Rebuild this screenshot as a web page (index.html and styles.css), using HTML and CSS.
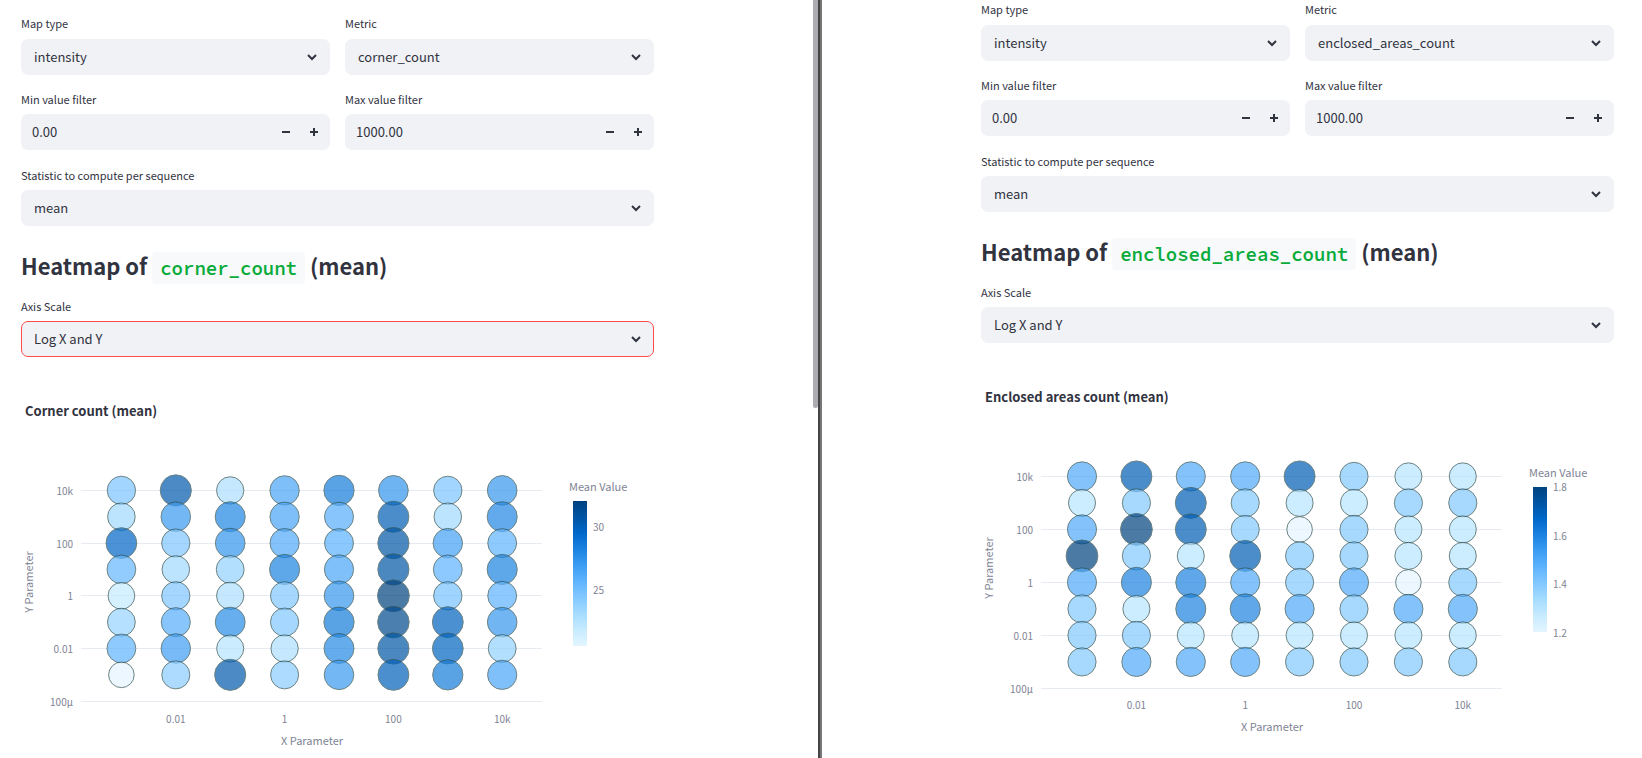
FILE: index.html
```html
<!DOCTYPE html>
<html lang="en">
<head>
<meta charset="utf-8">
<title>Heatmap comparison</title>
<link rel="stylesheet" href="styles.css">
</head>
<body>
<main class="split">
  <section class="pane pane-left">
    <div class="content">
      <div class="row">
        <div class="field">
          <label for="l-map">Map type</label>
          <div class="select"><select id="l-map"><option>intensity</option></select><svg class="chevron" viewBox="0 0 12 8"><path d="M2 2l4 4 4-4"/></svg></div>
        </div>
        <div class="field">
          <label for="l-metric">Metric</label>
          <div class="select"><select id="l-metric"><option>corner_count</option></select><svg class="chevron" viewBox="0 0 12 8"><path d="M2 2l4 4 4-4"/></svg></div>
        </div>
      </div>
      <div class="row">
        <div class="field">
          <label for="l-min">Min value filter</label>
          <div class="number"><input id="l-min" type="text" value="0.00"><button type="button" aria-label="Decrease"><svg viewBox="0 0 8 8"><path d="M0 4h8"/></svg></button><button type="button" aria-label="Increase"><svg viewBox="0 0 8 8"><path d="M0 4h8M4 0v8"/></svg></button></div>
        </div>
        <div class="field">
          <label for="l-max">Max value filter</label>
          <div class="number"><input id="l-max" type="text" value="1000.00"><button type="button" aria-label="Decrease"><svg viewBox="0 0 8 8"><path d="M0 4h8"/></svg></button><button type="button" aria-label="Increase"><svg viewBox="0 0 8 8"><path d="M0 4h8M4 0v8"/></svg></button></div>
        </div>
      </div>
      <div class="field">
        <label for="l-stat">Statistic to compute per sequence</label>
        <div class="select"><select id="l-stat"><option>mean</option></select><svg class="chevron" viewBox="0 0 12 8"><path d="M2 2l4 4 4-4"/></svg></div>
      </div>
      <h2>Heatmap of <code>corner_count</code> (mean)</h2>
      <div class="field">
        <label for="l-axis">Axis Scale</label>
        <div class="select focused"><select id="l-axis"><option>Log X and Y</option></select><svg class="chevron" viewBox="0 0 12 8"><path d="M2 2l4 4 4-4"/></svg></div>
      </div>
      <svg class="chart" id="chart-corners" viewBox="0 0 633 380" role="img" aria-label="Corner count (mean)"></svg>
    </div>
    <div class="scroll-thumb"></div>
  </section>
  <div class="divider"></div>
  <section class="pane pane-right">
    <div class="content">
      <div class="row">
        <div class="field">
          <label for="r-map">Map type</label>
          <div class="select"><select id="r-map"><option>intensity</option></select><svg class="chevron" viewBox="0 0 12 8"><path d="M2 2l4 4 4-4"/></svg></div>
        </div>
        <div class="field">
          <label for="r-metric">Metric</label>
          <div class="select"><select id="r-metric"><option>enclosed_areas_count</option></select><svg class="chevron" viewBox="0 0 12 8"><path d="M2 2l4 4 4-4"/></svg></div>
        </div>
      </div>
      <div class="row">
        <div class="field">
          <label for="r-min">Min value filter</label>
          <div class="number"><input id="r-min" type="text" value="0.00"><button type="button" aria-label="Decrease"><svg viewBox="0 0 8 8"><path d="M0 4h8"/></svg></button><button type="button" aria-label="Increase"><svg viewBox="0 0 8 8"><path d="M0 4h8M4 0v8"/></svg></button></div>
        </div>
        <div class="field">
          <label for="r-max">Max value filter</label>
          <div class="number"><input id="r-max" type="text" value="1000.00"><button type="button" aria-label="Decrease"><svg viewBox="0 0 8 8"><path d="M0 4h8"/></svg></button><button type="button" aria-label="Increase"><svg viewBox="0 0 8 8"><path d="M0 4h8M4 0v8"/></svg></button></div>
        </div>
      </div>
      <div class="field">
        <label for="r-stat">Statistic to compute per sequence</label>
        <div class="select"><select id="r-stat"><option>mean</option></select><svg class="chevron" viewBox="0 0 12 8"><path d="M2 2l4 4 4-4"/></svg></div>
      </div>
      <h2>Heatmap of <code>enclosed_areas_count</code> (mean)</h2>
      <div class="field">
        <label for="r-axis">Axis Scale</label>
        <div class="select"><select id="r-axis"><option>Log X and Y</option></select><svg class="chevron" viewBox="0 0 12 8"><path d="M2 2l4 4 4-4"/></svg></div>
      </div>
      <svg class="chart" id="chart-areas" viewBox="0 0 633 380" role="img" aria-label="Enclosed areas count (mean)"></svg>
    </div>
  </section>
</main>
<script src="charts.js"></script>
</body>
</html>
```
FILE: styles.css
```css
* {
  box-sizing: border-box;
}

body {
  margin: 0;
  background: #fff;
  color: #31333f;
  font-family: "Noto Sans CJK SC", "Noto Sans", sans-serif;
  font-size: 13px;
}

.split {
  display: flex;
  height: 100vh;
  overflow: hidden;
}

.pane {
  position: relative;
  flex: 1 1 0;
  min-width: 0;
  overflow: hidden;
}

.pane-left {
  padding: 14px 164px 0 21px;
}

.pane-right {
  padding: 0 28px 0 159px;
}

.divider {
  flex: none;
  width: 4px;
  background: #777;
  border-left: 2px solid #444;
}

.scroll-thumb {
  position: absolute;
  top: 0;
  right: 0;
  width: 5px;
  height: 408px;
  background: #acacb2;
  border-radius: 0 0 3px 3px;
}

.content {
  display: flex;
  flex-direction: column;
  gap: 15px;
}

.row {
  display: grid;
  grid-template-columns: 1fr 1fr;
  gap: 15px;
}

.row + .field {
  margin-top: 1px;
}

.field label {
  display: block;
  height: 20px;
  margin-bottom: 4px;
  font-size: 11px;
  line-height: 18px;
}

.row:first-child label {
  margin-bottom: 5px;
}

.select {
  position: relative;
}

.select select {
  display: block;
  width: 100%;
  height: 36px;
  padding: 0 32px 2px 12px;
  border: 1px solid #f0f2f6;
  border-radius: 7px;
  background: #f0f2f6;
  color: inherit;
  font: inherit;
  appearance: none;
  outline: none;
}

.select.focused select {
  border-color: #ff4b4b;
}

.chevron {
  position: absolute;
  top: 14px;
  right: 12px;
  width: 12px;
  height: 8px;
  fill: none;
  stroke: #31333f;
  stroke-width: 2;
  pointer-events: none;
}

.number {
  display: flex;
  height: 36px;
  padding-right: 2px;
  border-radius: 7px;
  background: #f0f2f6;
}

.number input {
  flex: 1;
  min-width: 0;
  padding: 0 11px 1px;
  border: 0;
  background: none;
  color: inherit;
  font: inherit;
  outline: none;
}

.number button {
  display: flex;
  align-items: center;
  justify-content: center;
  width: 28px;
  padding: 0;
  border: 0;
  background: none;
}

.number svg {
  width: 8px;
  height: 8px;
  overflow: visible;
  stroke: #31333f;
  stroke-width: 2;
}

h2 {
  margin: 7px 0 0;
  font-size: 22px;
  font-weight: 600;
  line-height: 34px;
  height: 34px;
  white-space: nowrap;
}

code {
  padding: 4px 8px;
  border-radius: 4px;
  background: #f8f9fb;
  color: #09ab3b;
  font-family: "Source Code Pro", "Noto Sans Mono CJK SC", "Liberation Mono", monospace;
  font-size: 19px;
  font-weight: 600;
}

.chart {
  display: block;
  width: 100%;
  overflow: visible;
}

.chart text {
  fill: #808495;
  font-size: 11px;
}

.chart .tick {
  font-size: 10px;
}

.chart .title {
  fill: #31333f;
  font-size: 13px;
  font-weight: 700;
}

.chart .grid {
  stroke: #e6eaf1;
}

.chart .point {
  stroke: #2f4f4f;
  stroke-width: 1;
  opacity: 0.7;
}
```
FILE: charts.js
```js
const SCALE = ["#e4f5ff", "#c7ebff", "#a6dcff", "#83c9ff", "#60b4ff",
  "#3d9df3", "#1c83e1", "#0068c9", "#0054a3", "#004280"];

function colorAt(t) {
  const p = t * (SCALE.length - 1);
  const i = Math.min(Math.floor(p), SCALE.length - 2);
  const part = (hex, k) => parseInt(hex.slice(1 + 2 * k, 3 + 2 * k), 16);
  const mix = [0, 1, 2].map(k =>
    Math.round(part(SCALE[i], k) + (part(SCALE[i + 1], k) - part(SCALE[i], k)) * (p - i)));
  return `rgb(${mix.join(",")})`;
}

function drawChart(id, opts) {
  const left = opts.left, stepX = 54.4, top = 118.4, stepY = opts.stepY;
  const out = [];
  out.push(`<defs><linearGradient id="${id}-g" x1="0" y1="1" x2="0" y2="0">` +
    SCALE.map((c, i) => `<stop offset="${i / 9}" stop-color="${c}"/>`).join("") +
    `</linearGradient></defs>`);
  out.push(`<text class="title" x="4" y="44">${opts.title}</text>`);
  ["10k", "100", "1", "0.01", "100µ"].forEach((label, i) => {
    const y = Math.floor(top + i * 2 * stepY) + 0.5;
    out.push(`<line class="grid" x1="60" x2="521" y1="${y}" y2="${y}"/>`);
    out.push(`<text class="tick" x="52" y="${y + 4}" text-anchor="end">${label}</text>`);
  });
  ["0.01", "1", "100", "10k"].forEach((label, i) => {
    out.push(`<text class="tick" x="${left + stepX * (1 + 2 * i)}" y="351" text-anchor="middle">${label}</text>`);
  });
  opts.rows.forEach((row, r) => row.forEach((v, c) => {
    const t = v / opts.max;
    const radius = 12.8 + 3.1 * Math.pow(t, 0.8);
    out.push(`<circle class="point" cx="${left + c * stepX}" cy="${top + r * stepY}" r="${radius}" fill="${colorAt(t)}"/>`);
  }));
  out.push(`<text x="291" y="373" text-anchor="middle">X Parameter</text>`);
  out.push(`<text transform="translate(12 210) rotate(-90)" text-anchor="middle">Y Parameter</text>`);
  out.push(`<text x="548" y="119">Mean Value</text>`);
  out.push(`<rect x="552" y="129" width="14" height="145" fill="url(#${id}-g)"/>`);
  opts.legend.forEach(([label, y]) =>
    out.push(`<text class="tick" x="572" y="${y}">${label}</text>`));
  document.getElementById(id).innerHTML = out.join("");
}

drawChart("chart-corners", {
  title: "Corner count (mean)",
  left: 100.4,
  stepY: 26.35,
  max: 100,
  legend: [["30", 159], ["25", 222]],
  rows: [
    [36, 86, 20, 52, 70, 59, 36, 58],
    [24, 57, 66, 52, 48, 84, 24, 65],
    [79, 35, 59, 50, 46, 88, 54, 44],
    [43, 24, 28, 67, 51, 88, 45, 67],
    [12, 35, 20, 34, 58, 100, 37, 45],
    [27, 48, 63, 34, 70, 95, 81, 58],
    [44, 55, 17, 20, 64, 88, 80, 28],
    [0, 31, 86, 31, 57, 82, 70, 51]
  ]
});

drawChart("chart-areas", {
  title: "Enclosed areas count (mean)",
  left: 101,
  stepY: 26.5,
  max: 6,
  legend: [["1.8", 133], ["1.6", 182], ["1.4", 230], ["1.2", 279]],
  rows: [
    [3, 5, 3, 3, 5, 2, 1, 1],
    [1, 2, 5, 2, 1, 1, 2, 2],
    [3, 6, 5, 2, 0, 2, 1, 1],
    [6, 2, 1, 5, 2, 2, 1, 1],
    [3, 4, 4, 3, 2, 3, 0, 2],
    [2, 1, 4, 4, 3, 2, 3, 3],
    [2, 2, 1, 1, 1, 1, 1, 1],
    [2, 3, 3, 3, 2, 2, 2, 2]
  ]
});
```
